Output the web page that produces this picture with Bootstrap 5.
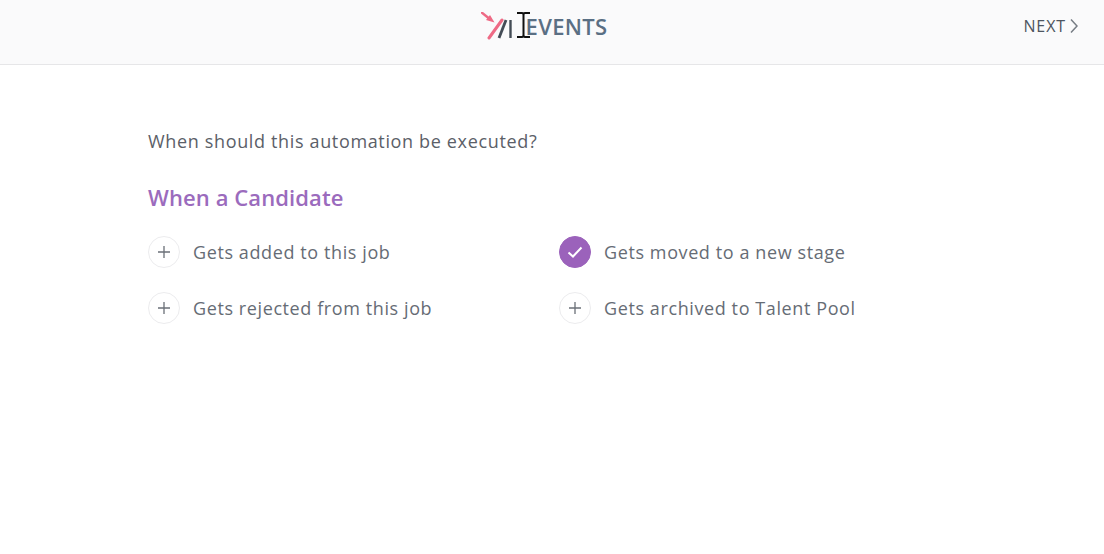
<!DOCTYPE html>
<html lang="en">
<head>
    <meta charset="UTF-8">
    <meta name="viewport" content="width=device-width, initial-scale=1.0">
    <title>Events</title>
    <link href="https://cdn.jsdelivr.net/npm/bootstrap@5.3.0/dist/css/bootstrap.min.css" rel="stylesheet">
    <style>
        html, body { height: 100%; }
        body { font-family: "Open Sans", "Noto Sans", sans-serif; color: #5f6670; background: #fff; overflow: hidden; }
        .top-bar { height: 65px; background: #fafafb; border-bottom: 1px solid #e6e6e8; position: relative; padding: 0 16px 13px 0; }
        .brand-title { font-size: 22px; font-weight: 600; color: #5a6f84; line-height: 1; letter-spacing: .3px; }
        .logo-mark { width: 31px; height: 28px; margin-right: 14px; }
        .next-link { position: absolute; right: 26px; top: 0; height: 52px; font-size: 16px; font-weight: 500; letter-spacing: .9px; color: #4d5560; text-decoration: none; }
        .text-cursor { position: absolute; left: 516px; top: 12px; width: 15px; height: 26px; }
        .page-body { padding: 64px 148px 0; }
        .question { font-size: 18px; line-height: 24px; letter-spacing: .65px; margin: 0 0 29px; color: #5b6068; }
        .group-title { font-size: 22px; font-weight: 600; line-height: 30px; letter-spacing: .1px; color: #9b6bbd; margin: 0 0 24px; }
        .event-grid { display: grid; grid-template-columns: 411px 1fr; row-gap: 24px; }
        .event-item { height: 32px; font-size: 18px; letter-spacing: .6px; color: #666c75; }
        .event-icon { width: 32px; height: 32px; border-radius: 50%; border: 1px solid #ececee; margin-right: 13px; flex: none; }
        .event-icon.is-on { background: #9b62bb; border-color: #9b62bb; }
    </style>
</head>
<body>
    <header class="top-bar d-flex align-items-center justify-content-center">
        <svg class="logo-mark" viewBox="0 0 31 28">
            <path d="M0 0 L10 8" stroke="#ee6a85" stroke-width="2.5" fill="none"/>
            <path d="M13.5 10.5 L5 8 L9 3 Z" fill="#ee6a85"/>
            <path d="M8 26 L21 8" stroke="#ee6a85" stroke-width="3" stroke-linecap="round" fill="none"/>
            <path d="M18 26 L25 8" stroke="#444c56" stroke-width="2.8" fill="none"/>
            <path d="M29.5 8 V26" stroke="#444c56" stroke-width="2.4" fill="none"/>
        </svg>
        <span class="brand-title">EVENTS</span>
        <svg class="text-cursor" viewBox="0 0 15 26">
            <path d="M1 1 H6 Q7.5 1 7.5 3 V23 Q7.5 25 6 25 H1 M14 1 H9 Q7.5 1 7.5 3 M7.5 23 Q7.5 25 9 25 H14" stroke="#111" stroke-width="2" fill="none"/>
        </svg>
        <a href="#" class="next-link d-flex align-items-center">NEXT
            <svg class="ms-1" width="8" height="16" viewBox="0 0 8 16"><path d="M1 1.5 L7 8 L1 14.5" stroke="#777d85" stroke-width="1.5" fill="none"/></svg>
        </a>
    </header>

    <main class="page-body">
        <p class="question">When should this automation be executed?</p>
        <h2 class="group-title">When a Candidate</h2>
        <div class="event-grid">
            <div class="event-item d-flex align-items-center">
                <span class="event-icon d-flex align-items-center justify-content-center"><svg width="12" height="12" viewBox="0 0 12 12"><path d="M6 0 V12 M0 6 H12" stroke="#6b7078" stroke-width="1.3"/></svg></span>
                Gets added to this job
            </div>
            <div class="event-item d-flex align-items-center">
                <span class="event-icon is-on d-flex align-items-center justify-content-center"><svg width="16" height="12" viewBox="0 0 16 12"><path d="M1.5 6.5 L6 10.5 L14.5 1.5" stroke="#fff" stroke-width="2" fill="none"/></svg></span>
                Gets moved to a new stage
            </div>
            <div class="event-item d-flex align-items-center">
                <span class="event-icon d-flex align-items-center justify-content-center"><svg width="12" height="12" viewBox="0 0 12 12"><path d="M6 0 V12 M0 6 H12" stroke="#6b7078" stroke-width="1.3"/></svg></span>
                Gets rejected from this job
            </div>
            <div class="event-item d-flex align-items-center">
                <span class="event-icon d-flex align-items-center justify-content-center"><svg width="12" height="12" viewBox="0 0 12 12"><path d="M6 0 V12 M0 6 H12" stroke="#6b7078" stroke-width="1.3"/></svg></span>
                Gets archived to Talent Pool
            </div>
        </div>
    </main>

    <script src="https://cdn.jsdelivr.net/npm/bootstrap@5.3.0/dist/js/bootstrap.bundle.min.js"></script>
</body>
</html>
